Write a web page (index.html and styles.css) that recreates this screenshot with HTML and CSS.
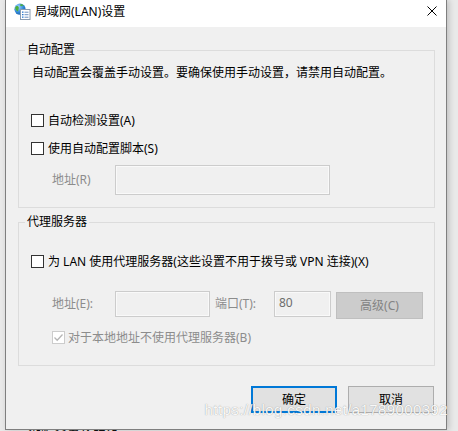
FILE: index.html
```html
<!DOCTYPE html>
<html lang="zh-CN">
<head>
<meta charset="utf-8">
<title>局域网(LAN)设置</title>
<link rel="stylesheet" href="styles.css">
</head>
<body>
<div class="desk">
  <div class="window">
    <div class="titlebar">
      <svg class="app-icon" width="17" height="17" viewBox="0 0 17 17">
        <defs>
          <radialGradient id="gl" cx="0.35" cy="0.3" r="0.8">
            <stop offset="0" stop-color="#9fd3ff"/>
            <stop offset="0.6" stop-color="#2f86d6"/>
            <stop offset="1" stop-color="#1a5ea8"/>
          </radialGradient>
        </defs>
        <circle cx="6" cy="6.2" r="5.6" fill="url(#gl)"/>
        <path d="M2.2 3.2c1.2-.4 2.2.2 2.6 1.2.3.9-.6 1.4-.4 2.4.2.9-.5 1.6-1.3 1.5C2 7.2 1.1 5.9 1.2 4.6z" fill="#4caf3a"/>
        <path d="M6.8 1.1c1 .1 2.2.6 2.8 1.3-.6.4-1.5.2-2 .7-.5.4-1.3.1-1.4-.6 0-.6.2-1 .6-1.4z" fill="#4caf3a"/>
        <rect x="6.5" y="6.5" width="9.5" height="10" fill="#ffffff" stroke="#8a9bb0" stroke-width="1"/>
        <rect x="8" y="8.5" width="1.5" height="1.3" fill="#2b78d0"/>
        <rect x="10.5" y="8.7" width="4" height="1" fill="#6b8fc0"/>
        <rect x="8" y="11" width="1.5" height="1.3" fill="#2b78d0"/>
        <rect x="10.5" y="11.2" width="4" height="1" fill="#6b8fc0"/>
        <rect x="8" y="13.5" width="1.5" height="1.3" fill="#2b78d0"/>
        <rect x="10.5" y="13.7" width="4" height="1" fill="#6b8fc0"/>
      </svg>
      <span class="title">局域网(LAN)设置</span>
      <svg class="close" width="10" height="10" viewBox="0 0 10 10">
        <path d="M0.5 0.5L9.5 9.5M9.5 0.5L0.5 9.5" stroke="#000" stroke-width="1"/>
      </svg>
    </div>
    <div class="content">
      <fieldset class="group group-auto">
        <legend>自动配置</legend>
        <p class="desc">自动配置会覆盖手动设置。要确保使用手动设置，请禁用自动配置。</p>
        <label class="check row-detect"><span class="box"></span>自动检测设置(A)</label>
        <label class="check row-script"><span class="box"></span>使用自动配置脚本(S)</label>
        <div class="field-row script-row">
          <span class="lbl dis">地址(R)</span>
          <span class="input input-script"></span>
        </div>
      </fieldset>
      <fieldset class="group group-proxy">
        <legend>代理服务器</legend>
        <label class="check row-proxy"><span class="box"></span>为 LAN 使用代理服务器(这些设置不用于拨号或 VPN 连接)(X)</label>
        <div class="field-row proxy-row">
          <span class="lbl dis">地址(E):</span>
          <span class="input input-addr"></span>
          <span class="lbl dis port-lbl">端口(T):</span>
          <span class="input input-port">80</span>
          <span class="btn btn-disabled">高级(C)</span>
        </div>
        <label class="check dis row-bypass"><span class="box box-checked"><svg width="11" height="11" viewBox="0 0 11 11"><path d="M1.5 5.5L4.2 8.2L9.5 2.5" fill="none" stroke="#b5b5b5" stroke-width="1.3"/></svg></span>对于本地地址不使用代理服务器(B)</label>
      </fieldset>
      <div class="actions">
        <span class="btn btn-default">确定</span>
        <span class="btn">取消</span>
      </div>
    </div>
    <div class="watermark">https://blog.csdn.net/a1789000392</div>
  </div>
  <div class="behind">潮陶爺君伦阳设</div>
</div>
</body>
</html>
```
FILE: styles.css
```css
html, body {
  margin: 0;
  padding: 0;
}
body {
  width: 458px;
  height: 431px;
  overflow: hidden;
  background: #e9e9e9;
  font-family: "Noto Sans", "Noto Sans CJK SC", "Microsoft YaHei", sans-serif;
  font-size: 12px;
  line-height: 16px;
  color: #000;
}
.desk {
  padding-left: 5px;
}
.window {
  position: relative;
  width: 440px;
  height: 429px;
  border: 1px solid #7f7f7f;
  border-top: none;
  background: #f0f0f0;
  box-shadow: 2px 0 6px rgba(0, 0, 0, 0.18);
  display: flex;
  flex-direction: column;
}
.titlebar {
  height: 27px;
  background: #ffffff;
  display: flex;
  align-items: flex-start;
  flex: none;
}
.app-icon {
  margin: 3px 0 0 8px;
  flex: none;
}
.title {
  margin: 4px 0 0 4px;
  font-size: 12px;
  line-height: 16px;
}
.close {
  margin: 6px 9px 0 auto;
  flex: none;
}
.content {
  flex: 1;
  display: flex;
  flex-direction: column;
}
.group {
  margin: 15px 11px 0 12px;
  padding: 0;
  border: 1px solid #dcdcdc;
  min-width: 0;
}
.group legend {
  margin-left: -6px;
  padding: 0 2px;
  line-height: 16px;
}
.group-auto {
  padding: 7px 0 12px 12px;
}
.group-proxy {
  margin-top: 6px;
  padding: 24px 0 20px 12px;
}
.desc {
  margin: 0;
  height: 16px;
  padding-left: 1px;
}
.check {
  display: flex;
  align-items: center;
  height: 15px;
  white-space: nowrap;
}
.box {
  box-sizing: border-box;
  width: 13px;
  height: 13px;
  border: 1px solid #333333;
  background: #ffffff;
  margin-right: 4px;
  flex: none;
  display: flex;
  align-items: center;
  justify-content: center;
}
.box-checked {
  border-color: #cccccc;
}
.row-detect {
  margin-top: 32px;
}
.row-script {
  margin-top: 13px;
}
.field-row {
  display: flex;
  align-items: flex-start;
}
.script-row {
  margin-top: 9px;
}
.lbl {
  margin-left: 21px;
  width: 63px;
  flex: none;
  white-space: nowrap;
}
.dis {
  color: #8c8c8c;
}
.script-row .lbl {
  line-height: 30px;
}
.input {
  box-sizing: border-box;
  border: 1px solid #cccccc;
  box-shadow: inset 0 0 0 1px #f9f9f9;
  background: #f0f0f0;
  flex: none;
}
.input-script {
  width: 215px;
  height: 30px;
}
.proxy-row {
  margin-top: 22px;
}
.proxy-row .lbl {
  line-height: 26px;
}
.input-addr {
  width: 95px;
  height: 26px;
}
.port-lbl {
  margin-left: 5px;
  width: 59px;
}
.input-port {
  width: 57px;
  height: 26px;
  padding-left: 4px;
  line-height: 22px;
  color: #6d6d6d;
}
.btn {
  box-sizing: border-box;
  display: flex;
  align-items: center;
  justify-content: center;
  height: 27px;
  width: 86px;
  border: 1px solid #adadad;
  background: #e1e1e1;
  flex: none;
}
.btn-disabled {
  margin: 1px 0 0 5px;
  width: 87px;
  background: #cccccc;
  border-color: #bfbfbf;
  color: #838383;
}
.btn-default {
  border: 2px solid #0078d7;
}
.row-bypass {
  margin-top: 11px;
  margin-left: 21px;
}
.row-bypass .box {
  margin-right: 3px;
}
.actions {
  display: flex;
  justify-content: flex-end;
  gap: 11px;
  margin-top: 20px;
  padding-right: 12px;
}
.watermark {
  position: absolute;
  right: -2px;
  top: 402px;
  font-family: "Liberation Sans", Arial, sans-serif;
  font-size: 15px;
  line-height: 16px;
  letter-spacing: 0.4px;
  color: rgba(255, 255, 255, 0.95);
  text-shadow: 0 0 1px rgba(100, 100, 100, 0.7);
  white-space: nowrap;
}
.behind {
  margin: -3px 0 0 23px;
  font-family: "Noto Sans CJK SC", sans-serif;
  font-size: 13px;
  line-height: 16px;
  color: #111;
  white-space: nowrap;
}
```
